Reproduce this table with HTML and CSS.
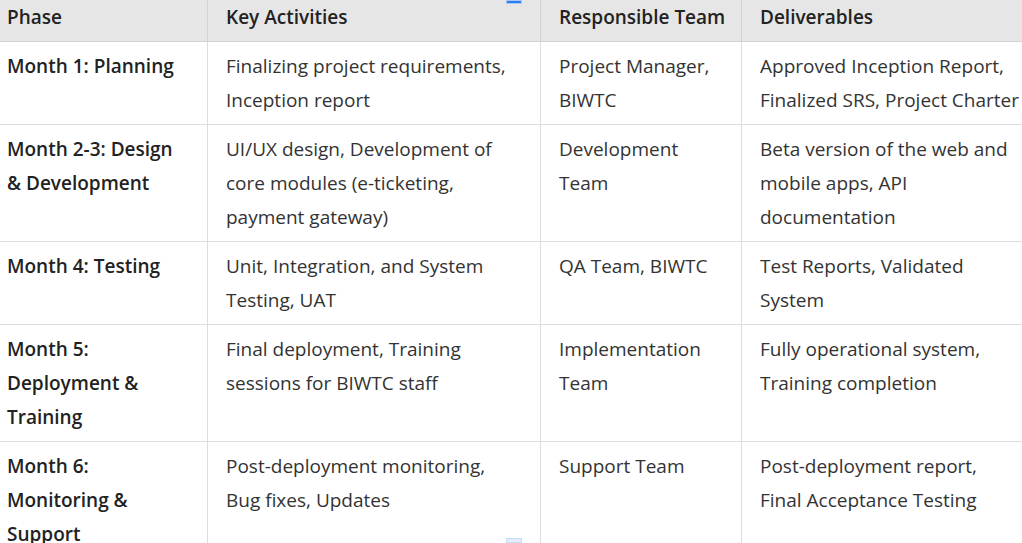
FILE: index.html
```html
<!DOCTYPE html>
<html>
<head>
<meta charset="utf-8">
<link rel="stylesheet" href="styles.css">
</head>
<body>
<div class="view">
  <table class="plan">
    <colgroup>
      <col class="c1"><col class="c2"><col class="c3"><col class="c4">
    </colgroup>
    <thead>
      <tr><th>Phase</th><th>Key Activities</th><th>Responsible Team</th><th>Deliverables</th></tr>
    </thead>
    <tbody>
      <tr><th>Month 1: Planning</th><td>Finalizing project requirements,<br>Inception report</td><td>Project Manager,<br>BIWTC</td><td>Approved Inception Report,<br>Finalized SRS, Project Charter</td></tr>
      <tr><th>Month 2-3: Design<br>&amp; Development</th><td>UI/UX design, Development of<br>core modules (e-ticketing,<br>payment gateway)</td><td>Development<br>Team</td><td>Beta version of the web and<br>mobile apps, API<br>documentation</td></tr>
      <tr><th>Month 4: Testing</th><td>Unit, Integration, and System<br>Testing, UAT</td><td>QA Team, BIWTC</td><td>Test Reports, Validated<br>System</td></tr>
      <tr><th>Month 5:<br>Deployment &amp;<br>Training</th><td>Final deployment, Training<br>sessions for BIWTC staff</td><td>Implementation<br>Team</td><td>Fully operational system,<br>Training completion</td></tr>
      <tr><th>Month 6:<br>Monitoring &amp;<br>Support</th><td>Post-deployment monitoring,<br>Bug fixes, Updates</td><td>Support Team</td><td>Post-deployment report,<br>Final Acceptance Testing</td></tr>
    </tbody>
  </table>
  <span class="handle top"></span>
  <span class="handle bottom"></span>
</div>
</body>
</html>
```

FILE: styles.css
```css
html, body {
  margin: 0;
  padding: 0;
  background: #ffffff;
}
.view {
  position: relative;
  width: 1022px;
  height: 543px;
  overflow: hidden;
}
.plan {
  border-collapse: collapse;
  table-layout: fixed;
  width: 1080px;
  margin-top: -8px;
  margin-left: -12px;
  font-family: "Open Sans", "Noto Sans", sans-serif;
  font-size: 19px;
  line-height: 34px;
  color: #333333;
}
.c1 { width: 219px; }
.c2 { width: 333px; }
.c3 { width: 201px; }
.c4 { width: 327px; }
.plan th, .plan td {
  border: 1px solid #dddddd;
  padding: 7px 12px 7px 18px;
  text-align: left;
  vertical-align: top;
}
.plan th {
  font-weight: 600;
  color: #222222;
}
.plan thead th {
  background: #e6e6e6;
  border-color: #d2d2d2;
  white-space: nowrap;
}
.handle {
  position: absolute;
  left: 506px;
  width: 16px;
}
.handle.top {
  top: 0;
  height: 4px;
  background: #2f7cf0;
  border: 1px solid #a8c8f8;
  box-sizing: border-box;
}
.handle.bottom {
  bottom: 0;
  height: 5px;
  background: #e3edfb;
  border: 1px solid #c9dcf6;
  box-sizing: border-box;
}
```
